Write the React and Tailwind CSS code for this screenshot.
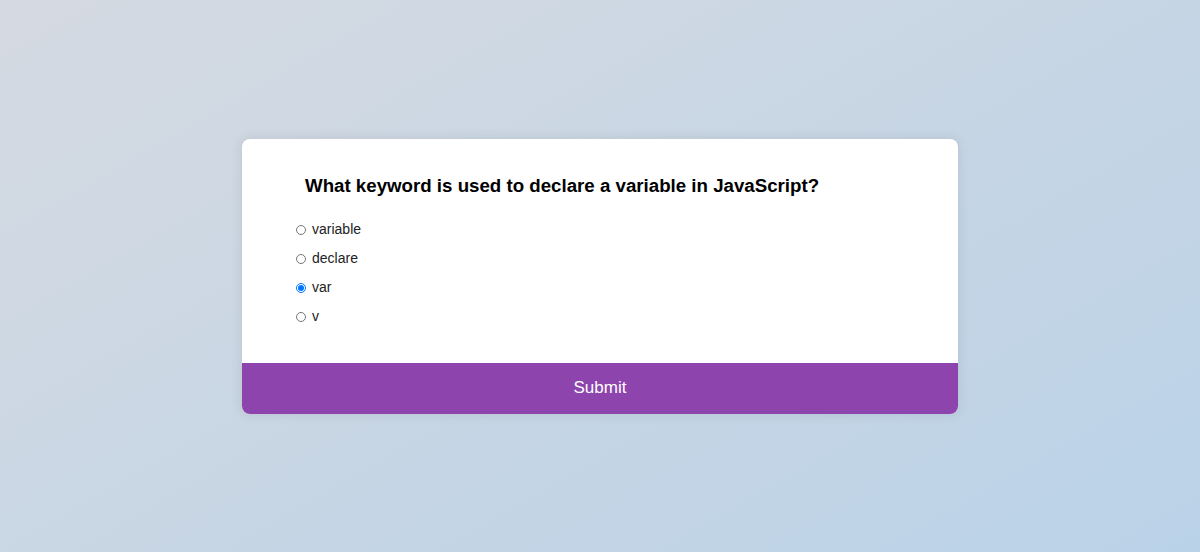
import React, { useState } from "react";

const options = ["variable", "declare", "var", "v"];

const App = () => {
  const [picked, setPicked] = useState("var");

  return (
    <div
      className="w-full h-[552px] flex items-center justify-center bg-[linear-gradient(150deg,#d5dae2_0%,#c8d6e4_50%,#bad2e8_100%)]"
      style={{ fontFamily: '"Liberation Sans", Arial, sans-serif' }}
    >
      <div className="w-[716px] bg-white rounded-[8px] overflow-hidden shadow-[0_0_10px_2px_rgba(100,100,100,0.12)]">
        <div className="pt-[35px] pb-[37px]">
          <h2 className="pl-[63px] text-[18.7px] leading-[24px] font-bold text-black">
            What keyword is used to declare a variable in JavaScript?
          </h2>
          <ul className="mt-[23px] pl-[54px] flex flex-col gap-[11px]">
            {options.map((opt) => (
              <li key={opt} className="flex items-center h-[18px]">
                <input
                  type="radio"
                  name="answer"
                  checked={picked === opt}
                  onChange={() => setPicked(opt)}
                  className="w-[10px] h-[10px] m-0 accent-[#0075ff]"
                />
                <label className="ml-[6px] text-[14px] text-[#222]">{opt}</label>
              </li>
            ))}
          </ul>
        </div>
        <button className="w-full h-[51px] bg-[#8e44ad] text-white text-[17px] flex items-center justify-center">
          Submit
        </button>
      </div>
    </div>
  );
};

export default App;
